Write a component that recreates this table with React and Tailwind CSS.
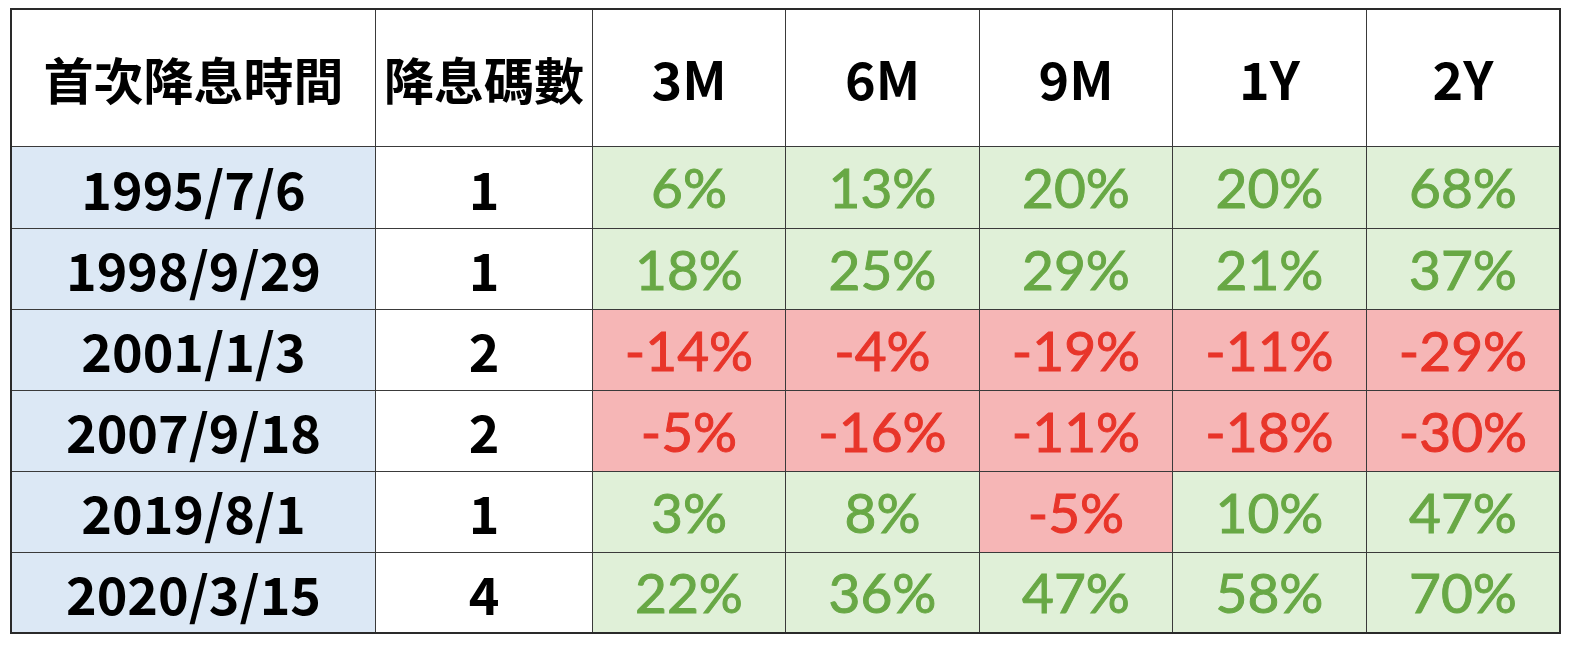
const headers = ['首次降息時間', '降息碼數', '3M', '6M', '9M', '1Y', '2Y'];

const rows = [
  { date: '1995/7/6', bp: '1', values: ['6%', '13%', '20%', '20%', '68%'] },
  { date: '1998/9/29', bp: '1', values: ['18%', '25%', '29%', '21%', '37%'] },
  { date: '2001/1/3', bp: '2', values: ['-14%', '-4%', '-19%', '-11%', '-29%'] },
  { date: '2007/9/18', bp: '2', values: ['-5%', '-16%', '-11%', '-18%', '-30%'] },
  { date: '2019/8/1', bp: '1', values: ['3%', '8%', '-5%', '10%', '47%'] },
  { date: '2020/3/15', bp: '4', values: ['22%', '36%', '47%', '58%', '70%'] },
];

const heights = ['h-[81px]', 'h-[80px]', 'h-[80px]', 'h-[80px]', 'h-[80px]', 'h-[79px]'];

const family = "font-['Noto_Sans_CJK_TC',sans-serif] font-bold text-black";
const black = `${family} text-[52px]`;
const cjk = `${family} text-[50px]`;
const pct = "font-['Lato','Noto_Sans',sans-serif] text-[55px] [-webkit-text-stroke:1px_currentColor]";

export default function App() {
  return (
    <div className="w-[1572px] h-[646px] bg-white pl-[10px] pt-[8px]">
      <div className="w-[1551px] border-2 border-[#2a2a2a] bg-[#3a3a3a]">
        <div className="grid grid-cols-[363px_216px_192px_193px_192px_193px_192px] gap-px">
          {headers.map((h) => (
            <div key={h} className={`h-[136px] bg-white flex items-center justify-center ${h.length > 3 ? cjk : black}`}>
              {h}
            </div>
          ))}
          {rows.map((row, i) => (
            <Row key={row.date} row={row} h={heights[i]} />
          ))}
        </div>
      </div>
    </div>
  );
}

function Row({ row, h }) {
  return (
    <>
      <div className={`${h} bg-[#dce8f5] flex items-center justify-center ${black}`}>{row.date}</div>
      <div className={`${h} bg-white flex items-center justify-center ${black}`}>{row.bp}</div>
      {row.values.map((v, j) => {
        const neg = v.startsWith('-');
        return (
          <div
            key={j}
            className={`${h} flex items-center justify-center ${pct} ${neg ? 'bg-[#f6b6b6] text-[#e8352a]' : 'bg-[#e0f0d8] text-[#68a845]'}`}
          >
            {v}
          </div>
        );
      })}
    </>
  );
}
